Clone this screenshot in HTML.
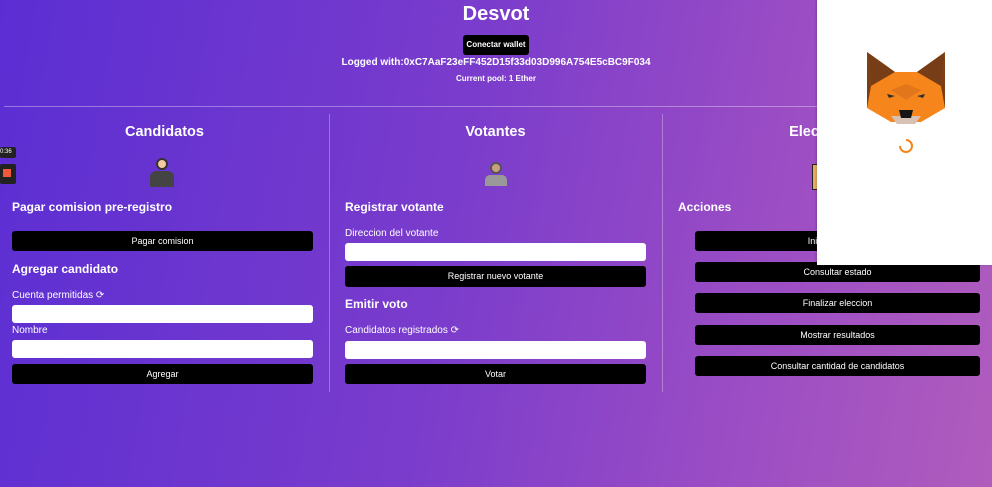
<!DOCTYPE html><html><head><style>
*{margin:0;padding:0;box-sizing:border-box}
body{width:992px;height:487px;overflow:hidden;position:relative;font-family:"Liberation Sans",sans-serif;color:#fff;background:linear-gradient(100deg,#5b2ed3 0%,#7a3ccc 45%,#9b4dc4 75%,#b05cbd 100%)}
.a{position:absolute}
.c{text-align:center}
.btn{position:absolute;background:#000;border-radius:3px;color:#fff;font-size:9px;text-align:center;line-height:20px}
.in{position:absolute;background:#fff;border-radius:3px;height:18px}
h2{position:absolute;font-size:14.5px;font-weight:bold;text-align:center}
h3{position:absolute;font-size:12px;font-weight:bold}
.l{position:absolute;font-size:10px}
.vl{position:absolute;top:114px;height:278px;width:1px;background:rgba(255,255,255,.3)}
</style></head><body>
<div class="a c" style="left:0;width:992px;top:3px;font-size:20px;font-weight:bold">Desvot</div>
<div class="btn" style="left:463px;top:35px;width:66px;height:20px;font-weight:bold;font-size:8px">Conectar wallet</div>
<div class="a c" style="left:0;width:992px;top:57px;font-size:10px;font-weight:bold">Logged with:0xC7AaF23eFF452D15f33d03D996A754E5cBC9F034</div>
<div class="a c" style="left:0;width:992px;top:74px;font-size:8px;font-weight:bold">Current pool: 1 Ether</div>
<div class="a" style="left:4px;top:106px;width:986px;height:1px;background:rgba(255,255,255,.35)"></div>
<div class="vl" style="left:329px"></div><div class="vl" style="left:662px"></div>
<h2 style="left:0;width:329px;top:124px">Candidatos</h2>
<h2 style="left:329px;width:333px;top:124px">Votantes</h2>
<h2 style="left:662px;width:330px;top:124px">Elecciones</h2>
<div class="a" style="left:0;top:147px;width:16px;height:11px;background:#222;border-radius:2px;font-size:6px;line-height:11px">0:36</div>
<div class="a" style="left:0;top:164px;width:16px;height:20px;background:#222;border-radius:2px"><div style="margin:5px 0 0 3px;width:8px;height:8px;background:#f05a3a"></div></div>
<div class="a" style="left:148px;top:158px;width:28px;height:32px"><div style="margin:0 auto;width:12px;height:12px;border-radius:50%;background:#f2c9a0;border:2px solid #333"></div><div style="margin:1px auto;width:24px;height:16px;background:#444;border-radius:6px 6px 0 0"></div></div>
<div class="a" style="left:482px;top:158px;width:28px;height:30px"><div style="margin:4px auto 0;width:12px;height:12px;border-radius:50%;background:#c8a080;border:2px solid #555"></div><div style="margin:1px auto;width:22px;height:11px;background:#999;border-radius:5px 5px 0 0"></div></div>
<div class="a" style="left:812px;top:164px;width:6px;height:26px;background:#e8b060;border:1px solid #222"></div>
<h3 style="left:12px;top:200px">Pagar comision pre-registro</h3>
<div class="btn" style="left:12px;top:231px;width:301px;height:20px">Pagar comision</div>
<h3 style="left:12px;top:262px">Agregar candidato</h3>
<div class="l" style="left:12px;top:290px">Cuenta permitidas ⟳</div>
<div class="in" style="left:12px;top:305px;width:301px"></div>
<div class="l" style="left:12px;top:325px">Nombre</div>
<div class="in" style="left:12px;top:340px;width:301px"></div>
<div class="btn" style="left:12px;top:364px;width:301px;height:20px">Agregar</div>
<h3 style="left:345px;top:200px">Registrar votante</h3>
<div class="l" style="left:345px;top:228px">Direccion del votante</div>
<div class="in" style="left:345px;top:243px;width:301px"></div>
<div class="btn" style="left:345px;top:266px;width:301px;height:21px">Registrar nuevo votante</div>
<h3 style="left:345px;top:297px">Emitir voto</h3>
<div class="l" style="left:345px;top:325px">Candidatos registrados ⟳</div>
<div class="in" style="left:345px;top:341px;width:301px"></div>
<div class="btn" style="left:345px;top:364px;width:301px;height:20px">Votar</div>
<h3 style="left:678px;top:200px">Acciones</h3>
<div class="btn" style="left:695px;top:231px;width:285px;height:20px">Iniciar eleccion</div>
<div class="btn" style="left:695px;top:262px;width:285px;height:20px">Consultar estado</div>
<div class="btn" style="left:695px;top:293px;width:285px;height:20px">Finalizar eleccion</div>
<div class="btn" style="left:695px;top:325px;width:285px;height:20px">Mostrar resultados</div>
<div class="btn" style="left:695px;top:356px;width:285px;height:20px">Consultar cantidad de candidatos</div>
<div class="a" style="left:817px;top:0;width:175px;height:265px;background:#fff;box-shadow:-1px 0 2px rgba(0,0,0,.2)">
<svg class="a" style="left:48px;top:50px" width="82" height="76" viewBox="0 0 82 76">
<polygon points="2,2 30,22 52,22 80,2 80,58 56,72 26,72 2,58" fill="#f6851b"/>
<polygon points="2,2 30,22 6,36" fill="#763d16"/><polygon points="80,2 52,22 76,36" fill="#763d16"/>
<polygon points="2,2 6,36 2,58" fill="#7a3d14"/><polygon points="80,2 76,36 80,58" fill="#7a3d14"/>
<polygon points="26,40 41,34 56,40 41,50" fill="#e2761b"/>
<polygon points="26,66 56,66 50,74 32,74" fill="#d7c1b3"/><polygon points="34,60 48,60 46,68 36,68" fill="#161616"/>
<polygon points="22,44 30,46 24,48" fill="#2f2f2f"/><polygon points="60,44 52,46 58,48" fill="#2f2f2f"/>
</svg>
<svg class="a" style="left:82px;top:139px" width="14" height="14"><path d="M7 1 A6 6 0 1 1 1 7" stroke="#f6851b" stroke-width="2" fill="none"/></svg>
</div>
</body></html>
